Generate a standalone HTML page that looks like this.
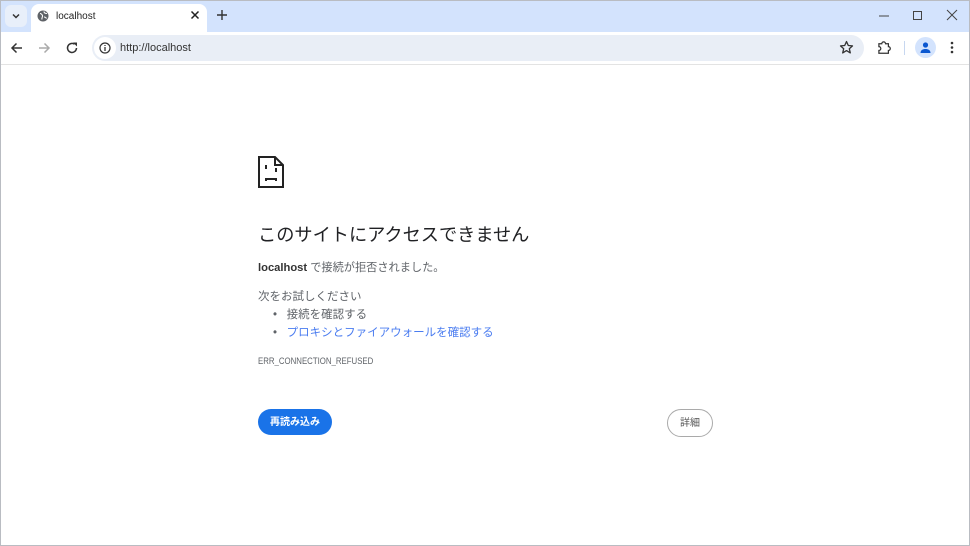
<!DOCTYPE html>
<html><head><meta charset="utf-8"><style>
*{margin:0;padding:0;box-sizing:border-box}
body{width:970px;height:546px;overflow:hidden;background:#fff;font-family:"Liberation Sans","Noto Sans CJK JP",sans-serif;position:relative}
.frame{position:absolute;inset:0;border:1px solid #b9bcc2;pointer-events:none}
.top{position:absolute;left:0;top:0;width:970px;height:33px;background:#d3e3fd}
.tab{position:absolute;left:31px;top:4px;width:176px;height:30px;background:#fff;border-radius:8px 8px 0 0}
.tb{position:absolute;left:0;top:32px;width:970px;height:33px;background:#fff;border-bottom:1px solid #e3e3e3}
.omni{position:absolute;left:92px;top:35px;width:772px;height:26px;background:#e9eef6;border-radius:13px}
.t{position:absolute;font-size:10px;color:#1f1f1f}
svg{position:absolute}
.c{position:absolute;left:258px;color:#5f6368;white-space:nowrap}
</style></head><body>
<div class="top"></div>
<div style="position:absolute;left:5px;top:5px;width:22px;height:22px;background:#e8effa;border-radius:6px"></div>
<svg style="left:11px;top:11px" width="10" height="10"><path d="M2 3.5l3 3 3-3" stroke="#333" stroke-width="1.5" fill="none"/></svg>
<div class="tab"></div>
<svg style="left:37px;top:10px" width="12" height="12" viewBox="0 0 12 12"><circle cx="6" cy="6" r="5.5" fill="#5f6368"/><path d="M3 3.5c1.5 0 2 1 2.5 2s-1 2-.5 4M7 1.5c0 1.5 1.5 2 3 2M7 7c1 0 2 .5 2.5 1.5" stroke="#fff" stroke-width="1.1" fill="none"/></svg>
<div class="t" style="left:56px;top:11px">localhost</div>
<svg style="left:190px;top:10px" width="10" height="10"><path d="M1.5 1.5l7 7M8.5 1.5l-7 7" stroke="#222" stroke-width="1.5"/></svg>
<svg style="left:216px;top:9px" width="12" height="12"><path d="M6 1v10M1 6h10" stroke="#333" stroke-width="1.4"/></svg>
<svg style="left:878px;top:10px" width="12" height="12"><path d="M1 6h10" stroke="#444" stroke-width="1"/></svg>
<svg style="left:912px;top:10px" width="12" height="12"><rect x="1.5" y="1.5" width="8" height="8" stroke="#444" fill="none"/></svg>
<svg style="left:946px;top:9px" width="12" height="12"><path d="M1 1l10 10M11 1L1 11" stroke="#444" stroke-width="1"/></svg>
<div class="tb"></div>
<svg style="left:10px;top:41px" width="14" height="14"><path d="M12 7H2M6.5 2.5L2 7l4.5 4.5" stroke="#333" stroke-width="1.5" fill="none"/></svg>
<svg style="left:37px;top:41px" width="14" height="14"><path d="M2 7h10M7.5 2.5L12 7l-4.5 4.5" stroke="#aaa" stroke-width="1.5" fill="none"/></svg>
<svg style="left:65px;top:41px" width="14" height="14"><path d="M11.5 7A4.5 4.5 0 1 1 9.5 3.2" stroke="#333" stroke-width="1.5" fill="none"/><path d="M8 1.5h4v4z" fill="#333"/></svg>
<div class="omni"></div>
<div style="position:absolute;left:94px;top:37px;width:22px;height:22px;border-radius:11px;background:#fff"></div>
<svg style="left:98px;top:41px" width="14" height="14"><circle cx="7" cy="7" r="5" stroke="#333" stroke-width="1.2" fill="none"/><path d="M7 6v4M7 4v1" stroke="#333" stroke-width="1.3"/></svg>
<div class="t" style="left:120px;top:42px;font-size:11px;color:#333">http://localhost</div>
<svg style="left:839px;top:40px" width="15" height="15" viewBox="0 0 15 15"><path d="M7.5 1.5l1.8 4 4.2.4-3.2 2.8 1 4.2-3.8-2.3-3.8 2.3 1-4.2L1.5 5.9l4.2-.4z" stroke="#333" stroke-width="1.3" fill="none" stroke-linejoin="round"/></svg>
<svg style="left:877px;top:40px" width="15" height="15"><path d="M2 4h3a2 2 0 0 1 4 0h3v3a2 2 0 0 1 0 4v3H2v-3a2 2 0 0 0 0-4z" transform="scale(.95)" stroke="#333" stroke-width="1.3" fill="none"/></svg>
<div style="position:absolute;left:904px;top:41px;width:1px;height:14px;background:#c7d7f0"></div>
<div style="position:absolute;left:915px;top:37px;width:21px;height:21px;border-radius:50%;background:#d3e3fd"></div>
<svg style="left:918px;top:40px" width="15" height="15"><circle cx="7.5" cy="5" r="2.6" fill="#0b57d0"/><path d="M2.5 13c0-3 2.5-4 5-4s5 1 5 4z" fill="#0b57d0"/></svg>
<svg style="left:950px;top:40px" width="4" height="15"><circle cx="2" cy="3" r="1.3" fill="#333"/><circle cx="2" cy="7.5" r="1.3" fill="#333"/><circle cx="2" cy="12" r="1.3" fill="#333"/></svg>

<svg style="left:258px;top:156px" width="26" height="32" viewBox="0 0 26 32"><path d="M1 1h16l8 8v22H1z" stroke="#222" stroke-width="2" fill="none"/><path d="M17 1v8h8" stroke="#222" stroke-width="2" fill="none"/><rect x="7" y="9" width="2" height="4" fill="#222"/><rect x="17" y="12" width="2" height="4" fill="#222"/><path d="M8 25v-2h10v2" stroke="#222" stroke-width="2" fill="none"/></svg>
<div class="c" style="top:221px;font-size:18.2px;color:#202124">このサイトにアクセスできません</div>
<div class="c" style="top:259px;font-size:11.2px"><b style="color:#333">localhost</b> で接続が拒否されました。</div>
<div class="c" style="top:288px;font-size:11.5px">次をお試しください</div>
<div class="c" style="top:306px;left:273px;font-size:11.5px">•&nbsp;&nbsp;&nbsp;接続を確認する</div>
<div class="c" style="top:324px;left:273px;font-size:11.5px">•&nbsp;&nbsp;&nbsp;<span style="color:#4a7cf0">プロキシとファイアウォールを確認する</span></div>
<div class="c" style="top:356px;font-size:9px;transform:scaleX(0.87);transform-origin:left">ERR_CONNECTION_REFUSED</div>
<div style="position:absolute;left:258px;top:409px;width:74px;height:26px;border-radius:13px;background:#1a73e8;color:#fff;font-size:10px;font-weight:bold;text-align:center;line-height:28px">再読み込み</div>
<div style="position:absolute;left:667px;top:409px;width:46px;height:28px;border-radius:14px;border:1px solid #aaa;color:#555;font-size:10px;text-align:center;line-height:28px">詳細</div>
<div class="frame"></div>
</body></html>
